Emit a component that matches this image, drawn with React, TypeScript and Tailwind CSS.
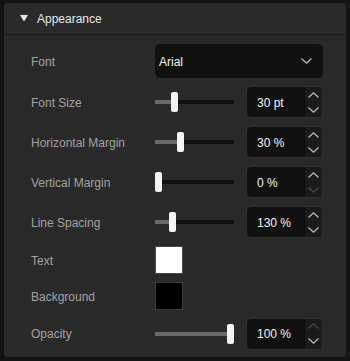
import React from "react";

const Chevron = ({ up, dim, className }: { up?: boolean; dim?: boolean; className?: string }) => (
  <svg width="11" height="6" viewBox="0 0 11 6" className={className}>
    <path
      d={up ? "M0.5 5.5 L5.5 0.8 L10.5 5.5" : "M0.5 0.5 L5.5 5.2 L10.5 0.5"}
      fill="none"
      stroke={dim ? "#4a4a4a" : "#bdbdbd"}
      strokeWidth="1.2"
    />
  </svg>
);

function Slider({ value }: { value: number }) {
  // track is 79px wide, thumb 7px
  const left = Math.round(value * 72);
  return (
    <div className="relative w-[79px] h-[20px] flex items-center">
      <div className="w-full h-[4px] bg-[#111111] flex">
        <div className="h-full bg-[#6a6a6a]" style={{ width: left + 3 }} />
      </div>
      <div
        className="absolute top-0 w-[7px] h-[20px] rounded-[2px] bg-[#f4f4f4]"
        style={{ left }}
      />
    </div>
  );
}

function NumberInput({ text, upDim, downDim }: { text: string; upDim?: boolean; downDim?: boolean }) {
  return (
    <div className="ml-[12px] w-[77px] h-[32px] flex rounded-[5px] bg-[#111111] border border-[#303030] overflow-hidden">
      <div className="flex-1 flex items-center pl-[10px] pt-[1px] text-[12px] text-[#f2f2f2]">{text}</div>
      <div className="w-[18px] bg-[#1b1b1b] border-l border-[#0c0c0c] flex flex-col items-center justify-center gap-[9px]">
        <Chevron up dim={upDim} />
        <Chevron dim={downDim} />
      </div>
    </div>
  );
}

function SliderRow({ label, value, text, upDim, downDim }: { label: string; value: number; text: string; upDim?: boolean; downDim?: boolean }) {
  return (
    <div className="h-[40px] flex items-center">
      <div className="w-[124px] pt-[1px] text-[12px] text-[#a3a3a3]">{label}</div>
      <Slider value={value} />
      <NumberInput text={text} upDim={upDim} downDim={downDim} />
    </div>
  );
}

export default function App() {
  return (
    <div
      className="w-[350px] h-[361px] bg-[#141414] pt-[3px] pl-[4px]"
      style={{ fontFamily: '"Liberation Sans", Arial, sans-serif' }}
    >
      <div className="w-[342px] h-[354px] bg-[#2a2a2a] rounded-[4px] flex flex-col">
        {/* header */}
        <div className="h-[32px] flex items-center pl-[16px] border-b border-[#1a1a1a]">
          <svg width="8" height="7" viewBox="0 0 8 7" className="mr-[9px]">
            <path d="M0 0 H8 L4 6.5 Z" fill="#f2f2f2" />
          </svg>
          <span className="text-[12px] text-[#e8e8e8]">Appearance</span>
        </div>

        <div className="pl-[27px] pt-[9px] flex flex-col">
          <div className="h-[34px] mb-[4px] flex items-center">
            <div className="w-[124px] pt-[1px] text-[12px] text-[#a3a3a3]">Font</div>
            <div className="w-[168px] h-[34px] rounded-[5px] bg-[#111111] flex items-center justify-between pl-[4px] pr-[11px]">
              <span className="pt-[1px] text-[12px] text-[#f2f2f2]">Arial</span>
              <Chevron />
            </div>
          </div>

          <SliderRow label="Font Size" value={0.222} text="30 pt" />
          <SliderRow label="Horizontal Margin" value={0.3} text="30 %" />
          <SliderRow label="Vertical Margin" value={0} text="0 %" downDim />
          <SliderRow label="Line Spacing" value={0.19} text="130 %" />

          <div className="h-[36px] flex items-center">
            <div className="w-[124px] pt-[1px] text-[12px] text-[#a3a3a3]">Text</div>
            <div className="w-[28px] h-[28px] bg-white border border-[#4a4a4a]" />
          </div>
          <div className="h-[36px] flex items-center">
            <div className="w-[124px] pt-[1px] text-[12px] text-[#a3a3a3]">Background</div>
            <div className="w-[28px] h-[28px] bg-black border border-[#3a3a3a]" />
          </div>

          <div className="h-[39px] flex items-center">
            <div className="w-[124px] pt-[1px] text-[12px] text-[#a3a3a3]">Opacity</div>
            <Slider value={1} />
            <NumberInput text="100 %" upDim />
          </div>
        </div>
      </div>
    </div>
  );
}
